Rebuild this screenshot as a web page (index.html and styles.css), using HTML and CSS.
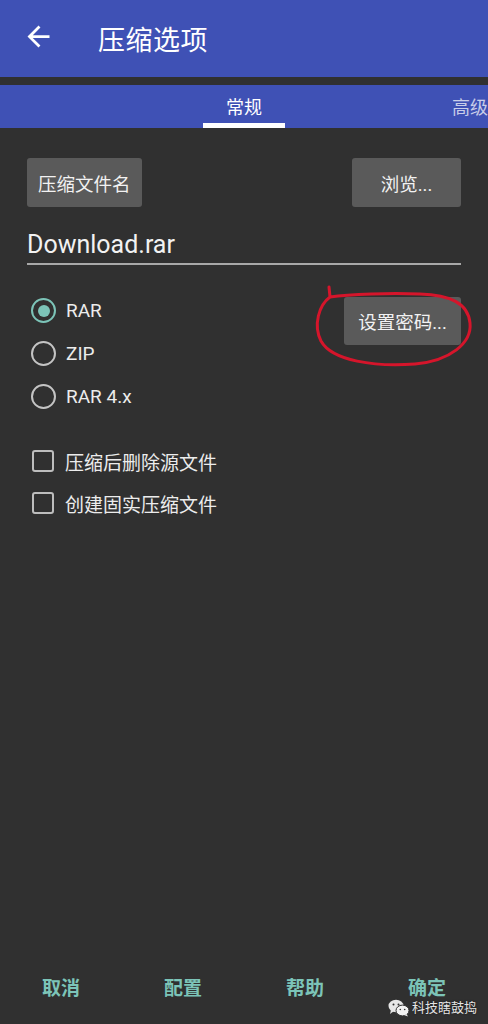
FILE: index.html
```html
<!DOCTYPE html>
<html lang="zh-CN">
<head>
  <meta charset="UTF-8">
  <meta name="viewport" content="width=device-width, initial-scale=1.0">
  <title>压缩选项</title>
  <link rel="stylesheet" href="styles.css">
</head>
<body>
  <div class="tela">
    <!-- Barra superior -->
    <header class="appbar">
      <button class="voltar" aria-label="返回">
        <svg viewBox="0 0 24 24" width="33" height="33"><path fill="#fff" d="M20 11H7.830l5.590-5.590L12 4l-8 8 8 8 1.410-1.410L7.830 13H20v-2z"/></svg>
      </button>
      <h1>压缩选项</h1>
    </header>

    <nav class="abas">
      <a href="#" class="aba ativa">常规</a>
      <a href="#" class="aba">高级</a>
    </nav>

    <!-- Conteúdo -->
    <main class="conteudo">
      <div class="linha-botoes">
        <button class="btn">压缩文件名</button>
        <button class="btn btn-largo">浏览...</button>
      </div>

      <div class="campo-nome">Download.rar</div>

      <div class="linha-formato">
        <div class="radios">
          <label class="opcao"><span class="radio marcado"></span>RAR</label>
          <label class="opcao"><span class="radio"></span>ZIP</label>
          <label class="opcao"><span class="radio"></span>RAR 4.x</label>
        </div>
        <div class="senha-wrap">
          <button class="btn btn-senha">设置密码...</button>
          <svg class="circulo" viewBox="0 0 170 90" width="170" height="90">
            <path d="M19 6 L20 16 C9 24 3 44 11 60 C22 80 65 86 105 83 C140 80 162 62 160 42 C158 22 140 14 110 13 C80 12 40 13 20 16"
                  fill="none" stroke="#d5152b" stroke-width="3" stroke-linecap="round" stroke-linejoin="round"/>
          </svg>
        </div>
      </div>

      <div class="checks">
        <label class="opcao"><span class="caixa"></span>压缩后删除源文件</label>
        <label class="opcao"><span class="caixa"></span>创建固实压缩文件</label>
      </div>
    </main>

    <footer class="acoes">
      <button>取消</button>
      <button>配置</button>
      <button>帮助</button>
      <button>确定</button>
    </footer>

    <div class="marca">
      <svg viewBox="0 0 22 18" width="22" height="18">
        <ellipse cx="8" cy="7" rx="7.5" ry="6.2" fill="#e6e6e6"/>
        <path d="M3 11 L2 15 L6 12 Z" fill="#e6e6e6"/>
        <ellipse cx="14.5" cy="11.5" rx="6.5" ry="5.4" fill="#f2f2f2" stroke="#303030" stroke-width="1"/>
        <path d="M18.5 15 L20 17.5 L16 16 Z" fill="#f2f2f2"/>
        <circle cx="5.5" cy="5.5" r="1" fill="#303030"/>
        <circle cx="10.5" cy="5.5" r="1" fill="#303030"/>
        <circle cx="12.3" cy="10.5" r="0.8" fill="#303030"/>
        <circle cx="16.7" cy="10.5" r="0.8" fill="#303030"/>
      </svg>
      <span>科技瞎鼓捣</span>
    </div>
  </div>
</body>
</html>
```

FILE: styles.css
```css
:root {
  --azul: #3f51b5;
  --fundo: #303030;
  --botao: #5a5a5a;
  --texto: #ececec;
  --verde: #7cc4b8;
}

* {
  box-sizing: border-box;
}

body {
  margin: 0;
  background: var(--fundo);
  color: var(--texto);
  font-family: 'Roboto', 'Noto Sans CJK SC', sans-serif;
}

.tela {
  position: relative;
  height: 1024px;
  display: flex;
  flex-direction: column;
  overflow: hidden;
}

button {
  font-family: inherit;
  cursor: pointer;
}

/* barra superior */
.appbar {
  background: var(--azul);
  height: 77px;
  display: flex;
  align-items: center;
  padding: 0 0 0 22px;
}

.voltar {
  background: none;
  border: none;
  padding: 0;
  width: 33px;
  height: 33px;
  margin-top: -4px;
}

.voltar svg {
  display: block;
}

.appbar h1 {
  margin: 0 0 0 43px;
  font-size: 27px;
  font-weight: 400;
  color: #fff;
  letter-spacing: 0.5px;
}

.abas {
  margin-top: 8px;
  background: var(--azul);
  height: 43px;
  display: flex;
  padding-left: 203px;
  gap: 144px;
  white-space: nowrap;
}

.aba {
  flex: 0 0 82px;
  display: flex;
  align-items: center;
  justify-content: center;
  color: rgba(255, 255, 255, 0.72);
  text-decoration: none;
  font-size: 18px;
  border-bottom: 5px solid transparent;
  padding-top: 4px;
}

.aba.ativa {
  color: #fff;
  border-bottom-color: #fff;
}

/* conteúdo */
.conteudo {
  flex: 1;
  padding: 30px 27px 0;
}

.btn {
  background: var(--botao);
  color: #f2f2f2;
  border: none;
  border-radius: 3px;
  font-size: 18.5px;
  padding: 0 11px;
  height: 49px;
}

.linha-botoes {
  display: flex;
  justify-content: space-between;
}

.btn-largo {
  width: 109px;
}

.campo-nome {
  margin-top: 18px;
  height: 40px;
  line-height: 40px;
  font-size: 25px;
  color: #f2f2f2;
  border-bottom: 2px solid #a8a8a8;
}

.linha-formato {
  margin-top: 24px;
  display: flex;
  justify-content: space-between;
  align-items: flex-start;
}

.opcao {
  display: flex;
  align-items: center;
  height: 43px;
  font-size: 19px;
  gap: 10px;
  padding-left: 4px;
}

.radio {
  width: 25px;
  height: 25px;
  border: 2.5px solid #c4c4c4;
  border-radius: 50%;
  display: flex;
  align-items: center;
  justify-content: center;
}

.radio.marcado {
  border-color: var(--verde);
}

.radio.marcado::after {
  content: '';
  width: 12px;
  height: 12px;
  border-radius: 50%;
  background: var(--verde);
}

.senha-wrap {
  position: relative;
  margin-top: 8px;
}

.btn-senha {
  width: 117px;
  height: 48px;
}

.circulo {
  position: absolute;
  left: -34px;
  top: -16px;
  pointer-events: none;
}

.checks {
  margin-top: 22px;
}

.checks .opcao {
  height: 42px;
  padding-left: 5px;
  gap: 11px;
}

.caixa {
  width: 22px;
  height: 22px;
  border: 2.5px solid #bdbdbd;
  border-radius: 3px;
}

/* ações */
.acoes {
  height: 72px;
  display: grid;
  grid-template-columns: repeat(4, 1fr);
  align-items: center;
}

.acoes button {
  background: none;
  border: none;
  color: var(--verde);
  font-size: 19px;
  font-weight: 700;
  height: 100%;
  padding: 0 0 4px;
}

.marca {
  position: absolute;
  left: 388px;
  top: 995px;
  display: flex;
  align-items: center;
  gap: 2px;
  color: #e4e4e4;
  font-size: 13px;
  text-shadow: 0 0 2px rgba(0, 0, 0, 0.6);
}

.marca svg {
  margin-top: 4px;
}
```
